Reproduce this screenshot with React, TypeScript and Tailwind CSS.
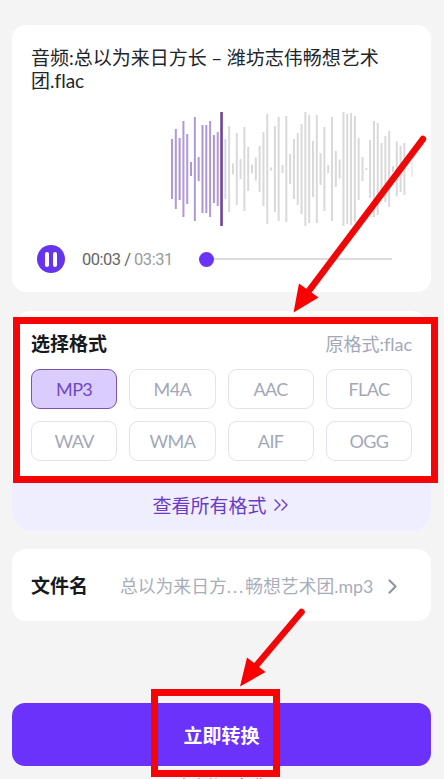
import { ChevronRight, ChevronsRight } from 'lucide-react'

const formats = ['MP3', 'M4A', 'AAC', 'FLAC', 'WAV', 'WMA', 'AIF', 'OGG']

const selectedFormat = 'MP3'

// Half height of each bar, left to right
const wave = [
  30, 40, 31, 48, 35, 7, 52, 12, 44, 44, 48, 34, 37, 57, 30, 43, 5.5, 36, 10, 42, 22,
  4.5, 11.5, 23, 37, 55, 1.5, 43, 52, 4, 53, 15, 30, 36, 45, 57, 54, 28, 54, 16, 42, 4,
  52, 18, 9.5, 57, 55, 56, 53, 31, 12, 1, 29, 48, 46, 26, 33, 38, 3, 27.5, 23, 26, 1, 8,
]

const playhead = 13

function barColor(i: number) {
  if (i === playhead) return '#6e4599'
  if (i < playhead) return i % 3 === 2 ? '#ae96cb' : '#af98dc'
  return i > 61 ? '#ececec' : '#d9d9d9'
}

function Waveform() {
  return (
    <svg width="260" height="120" viewBox="0 0 260 120" className="ml-[158px] block">
      {wave.map((h, i) => (
        <line
          key={i}
          x1={2 + i * 3.81}
          x2={2 + i * 3.81}
          y1={60 - h}
          y2={60 + h}
          stroke={barColor(i)}
          strokeWidth={i === playhead ? 2.6 : 2}
        />
      ))}
    </svg>
  )
}

function Player() {
  return (
    <div className="mt-4 flex h-7 items-center pl-[25px]">
      <button className="flex size-7 items-center justify-center gap-1 rounded-full bg-[#6633ee]">
        <span className="h-[15px] w-1 rounded-full bg-white" />
        <span className="h-[15px] w-1 rounded-full bg-white" />
      </button>
      <p className="mt-0.5 ml-[17px] w-[117px] font-['Roboto',sans-serif] text-[16.5px] tracking-[-0.5px] whitespace-nowrap text-[#9b9b9b]">
        <span className="text-[#666]">00:03 /</span> 03:31
      </p>
      <div className="flex items-center">
        <span className="size-[15px] rounded-full bg-[#6a33f5]" />
        <span className="h-0.5 w-[178px] bg-[#dcdcdc]" />
      </div>
    </div>
  )
}

function Annotations() {
  return (
    <>
      <div className="absolute top-[317px] left-[13px] h-[166px] w-[425px] border-[7px] border-[#f50505]" />
      <div className="absolute top-[689px] left-[151px] h-[88px] w-[129px] border-[7px] border-[#f50505]" />
      <svg className="absolute inset-0" width="444" height="779" viewBox="0 0 444 779">
        <g stroke="#ee0808" strokeWidth="6.5" strokeLinecap="round">
          <line x1="423" y1="139" x2="308" y2="292" />
          <line x1="301.5" y1="612" x2="255" y2="667" />
        </g>
        <g fill="#fb0000">
          <path d="M293.5 312.5 299 283.5 318.5 297.5Z" />
          <path d="M240 686.5 247 657.5 265.5 672Z" />
        </g>
      </svg>
    </>
  )
}

export default function App() {
  return (
    <div className="relative h-[779px] w-[444px] overflow-hidden bg-[#f4f4f4] pt-[25px] pr-[13px] pl-3 font-[Lato,'Noto_Sans_CJK_SC',sans-serif] [font-variant-ligatures:none]">
      {/* Audio preview */}
      <section className="h-[267px] rounded-[14px] bg-white pt-[21px]">
        <h1 className="h-[63px] pl-[19px] text-[19px] leading-[23px] text-[#22252a]">
          <span className="block whitespace-nowrap">
            音频:总以为来日方长<span className="mx-[4.5px]">–</span>潍坊志伟畅想艺术
          </span>
          <span className="block">团.flac</span>
        </h1>
        <Waveform />
        <Player />
      </section>

      {/* Output format */}
      <section className="mt-[19px] h-[220px] overflow-hidden rounded-[20px] bg-white">
        <div className="flex h-[58px] items-center justify-between pt-[9px] pr-[19px] pl-[19px]">
          <h2 className="text-[19px] font-bold text-[#17191e]">选择格式</h2>
          <span className="text-[18px] text-[#a3a8b8]">原格式:flac</span>
        </div>
        <div className="grid grid-cols-4 gap-x-3 gap-y-3 pr-[19px] pl-[19px]">
          {formats.map((format) => (
            <button
              key={format}
              className={[
                'h-10 rounded-[9px] border text-[18px] tracking-[-0.6px]',
                format === selectedFormat
                  ? 'border-[#7d50b4] bg-[#dacdfe] text-[#7146c8]'
                  : 'border-[#e0e3ed] text-[#a3a8b6]',
              ].join(' ')}
            >
              {format}
            </button>
          ))}
        </div>
        <div className="mt-[18px] flex h-[52px] items-center justify-center gap-0.5 bg-[#eeeeff] pt-0.5 pl-0.5 text-[19px] text-[#6b3ac6]">
          查看所有格式
          <ChevronsRight size={24} strokeWidth={1.4} className="-mt-0.5" />
        </div>
      </section>

      {/* File name */}
      <section className="mt-[18px] flex h-[72px] items-center rounded-[14px] bg-white pt-0.5 pl-[19px]">
        <h2 className="w-[89px] text-[19px] font-bold text-[#17191e]">文件名</h2>
        <span className="w-[260px] text-[17.8px] whitespace-nowrap text-[#a8adba]">
          总以为来日方<span className="tracking-[2px]">...</span>畅想艺术团.mp3
        </span>
        <ChevronRight size={25} strokeWidth={1.9} className="text-[#8e94a6]" />
      </section>

      <button className="mt-[82px] h-[63px] w-full rounded-[13px] bg-[#6a32fb] pt-[3px] text-[19px] font-bold text-white">
        立即转换
      </button>
      <p className="mt-[9px] text-center text-[15px] leading-[20px] text-[#ee2222]">本次使用免费</p>

      <Annotations />
    </div>
  )
}
